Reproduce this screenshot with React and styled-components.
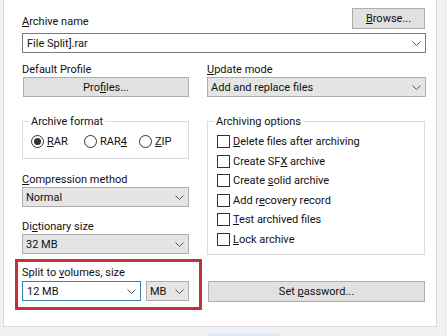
import React from 'react';
import styled, { createGlobalStyle } from 'styled-components';

const GlobalStyle = createGlobalStyle`
  body {
    margin: 0;
    background: #f0f0f0;
    font-family: Roboto, "Noto Sans", "Liberation Sans", sans-serif;
    font-size: 11px;
    color: #111;
  }
`

const Panel = styled.div`
  box-sizing: border-box;
  width: 434px;
  height: 327px;
  margin-left: 3px;
  background: #fff;
  border: 1px solid #dadada;
  border-top: none;
  padding: 0 10px 0 18px;
`

const HeaderRow = styled.div`
  display: flex;
  align-items: flex-end;
  justify-content: space-between;
  padding-top: 8px;
`

const Label = styled.div`
  height: 15px;
  line-height: 15px;
  margin-top: ${({ $top }) => $top || 0}px;
  white-space: nowrap;
`

const Button = styled.div`
  box-sizing: border-box;
  width: ${({ $w }) => $w}px;
  height: ${({ $h }) => $h || 20}px;
  margin-top: ${({ $top }) => $top || 0}px;
  margin-left: ${({ $left }) => $left || 0}px;
  margin-right: ${({ $right }) => $right || 0}px;
  background: #e1e1e1;
  border: 1px solid #adadad;
  display: flex;
  align-items: center;
  justify-content: center;
  line-height: 15px;
  white-space: pre;
`

const Combo = styled.div`
  box-sizing: border-box;
  width: ${({ $w }) => ($w ? `${$w}px` : '100%')};
  height: 20px;
  margin-top: ${({ $top }) => $top || 0}px;
  background: ${({ $edit }) => ($edit ? '#fff' : '#e5e5e5')};
  border: 1px solid ${({ $edit, $focus }) => ($focus ? '#3d7fae' : $edit ? '#7a7a7a' : '#adadad')};
  display: flex;
  align-items: center;
  justify-content: space-between;
  padding: 0 4px 0 ${({ $edit }) => ($edit ? 4 : 3)}px;
  line-height: 15px;
  white-space: pre;
`

const Columns = styled.div`
  display: grid;
  grid-template-columns: 167px 219px;
  column-gap: 18px;
  margin-top: 9px;
`

const Column = styled.div`
  display: flex;
  flex-direction: column;
  align-items: flex-start;
`

const Group = styled.div`
  position: relative;
  box-sizing: border-box;
  width: ${({ $w }) => $w}px;
  height: ${({ $h }) => $h}px;
  margin-top: 24px;
  border: 1px solid #dcdcdc;
  padding: ${({ $pad }) => $pad};
`

const Caption = styled.span`
  position: absolute;
  top: -8px;
  left: ${({ $left }) => $left}px;
  padding: 0 2px;
  background: #fff;
  line-height: 15px;
`

const RadioRow = styled.div`
  display: flex;
  align-items: center;
  height: 15px;
`

const RadioItem = styled.div`
  display: flex;
  align-items: center;
  gap: 3px;
  width: ${({ $w }) => ($w ? `${$w}px` : 'auto')};
`

const RadioDot = styled.span`
  box-sizing: border-box;
  width: 13px;
  height: 13px;
  border-radius: 50%;
  border: 1px solid #333;
  display: flex;
  align-items: center;
  justify-content: center;
  &::after {
    content: '';
    width: 7px;
    height: 7px;
    border-radius: 50%;
    background: ${({ $on }) => ($on ? '#333' : 'transparent')};
  }
`

const CheckRow = styled.div`
  display: flex;
  align-items: center;
  gap: 3px;
  height: 19.5px;
  white-space: pre;
`

const CheckBox = styled.span`
  box-sizing: border-box;
  width: 13px;
  height: 13px;
  border: 1px solid #333;
  background: #fff;
`

const SplitBox = styled.div`
  margin: 5px -13px 0 -7px;
  border: 3px solid #c3303c;
  padding: 3px 10px 6px 4px;
  align-self: stretch;
`

const SplitRow = styled.div`
  display: flex;
  gap: 5px;
  margin-top: 1px;
`

const Footer = styled.div`
  width: 72px;
  height: 3px;
  margin: 6px 0 0 208px;
  background: #dcecfc;
`

const Chevron = () => (
  <svg width="9" height="5" viewBox="0 0 9 5">
    <path d="M0.5 0.5 L4.5 4.5 L8.5 0.5" fill="none" stroke="#555" strokeWidth="1" />
  </svg>
)

const options = [
  ['', 'D', 'elete files after archiving'],
  ['Create SF', 'X', ' archive'],
  ['Create ', 's', 'olid archive'],
  ['Add r', 'e', 'covery record'],
  ['', 'T', 'est archived files'],
  ['', 'L', 'ock archive'],
]

const App = () => {
  return (
    <>
      <GlobalStyle />
      <Panel>
        <HeaderRow>
          <Label><u>A</u>rchive name</Label>
          <Button $w={73} $h={21} $right={1}><span><u>B</u>rowse...</span></Button>
        </HeaderRow>
        <Combo $edit $top={4}>
          <span>File Split].rar</span>
          <Chevron />
        </Combo>
        <Columns>
          <Column>
            <Label>Default Profile</Label>
            <Button $w={166} $left={1}><span>Pro<u>f</u>iles...</span></Button>
            <Group $w={167} $h={38} $pad="12px 0 0 8px">
              <Caption $left={6}>Archive format</Caption>
              <RadioRow>
                <RadioItem $w={53}><RadioDot $on /><span><u>R</u>AR</span></RadioItem>
                <RadioItem $w={55}><RadioDot /><span>RAR<u>4</u></span></RadioItem>
                <RadioItem><RadioDot /><span><u>Z</u>IP</span></RadioItem>
              </RadioRow>
            </Group>
            <Label $top={13}><u>C</u>ompression method</Label>
            <Combo>
              <span>Normal</span>
              <Chevron />
            </Combo>
            <Label $top={12}>Di<u>c</u>tionary size</Label>
            <Combo>
              <span>32 MB</span>
              <Chevron />
            </Combo>
            <SplitBox>
              <Label>Split to <u>v</u>olumes, size</Label>
              <SplitRow>
                <Combo $edit $focus $w={119}>
                  <span>12 MB</span>
                  <Chevron />
                </Combo>
                <Combo $w={43}>
                  <span>MB</span>
                  <Chevron />
                </Combo>
              </SplitRow>
            </SplitBox>
          </Column>
          <Column>
            <Label><u>U</u>pdate mode</Label>
            <Combo>
              <span>Add and replace files</span>
              <Chevron />
            </Combo>
            <Group $w={218} $h={134} $pad="10px 0 0 9px">
              <Caption $left={6}>Archiving options</Caption>
              {options.map(([a, k, b]) => (
                <CheckRow key={k}>
                  <CheckBox />
                  <span>{a}<u>{k}</u>{b}</span>
                </CheckRow>
              ))}
            </Group>
            <Button $w={217} $h={21} $top={26} $left={1}><span>Set <u>p</u>assword...</span></Button>
          </Column>
        </Columns>
      </Panel>
      <Footer />
    </>
  );
};

export default App;
